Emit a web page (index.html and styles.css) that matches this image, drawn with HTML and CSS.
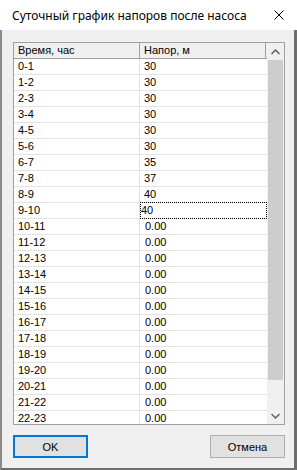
FILE: index.html
```html
<!DOCTYPE html>
<html lang="ru">
<head>
<meta charset="utf-8">
<link rel="stylesheet" href="styles.css">
</head>
<body>
<div class="window">
  <div class="titlebar">
    <span class="title">Суточный график напоров после насоса</span>
    <svg class="close" width="10" height="10" viewBox="0 0 10 10"><path d="M0.5 0.5 L9.5 9.5 M9.5 0.5 L0.5 9.5" stroke="#000" stroke-width="1" fill="none"/></svg>
  </div>
  <div class="client">
    <div class="grid">
      <div class="table">
        <div class="row head"><div class="cell c1">Время, час</div><div class="cell c2">Напор, м</div></div>
        <div class="rows">
          <div class="row"><div class="cell c1">0-1</div><div class="cell c2">30</div></div>
          <div class="row"><div class="cell c1">1-2</div><div class="cell c2">30</div></div>
          <div class="row"><div class="cell c1">2-3</div><div class="cell c2">30</div></div>
          <div class="row"><div class="cell c1">3-4</div><div class="cell c2">30</div></div>
          <div class="row"><div class="cell c1">4-5</div><div class="cell c2">30</div></div>
          <div class="row"><div class="cell c1">5-6</div><div class="cell c2">30</div></div>
          <div class="row"><div class="cell c1">6-7</div><div class="cell c2">35</div></div>
          <div class="row"><div class="cell c1">7-8</div><div class="cell c2">37</div></div>
          <div class="row"><div class="cell c1">8-9</div><div class="cell c2">40</div></div>
          <div class="row"><div class="cell c1">9-10</div><div class="cell c2 focus">40</div></div>
          <div class="row"><div class="cell c1">10-11</div><div class="cell c2 num">0.00</div></div>
          <div class="row"><div class="cell c1">11-12</div><div class="cell c2 num">0.00</div></div>
          <div class="row"><div class="cell c1">12-13</div><div class="cell c2 num">0.00</div></div>
          <div class="row"><div class="cell c1">13-14</div><div class="cell c2 num">0.00</div></div>
          <div class="row"><div class="cell c1">14-15</div><div class="cell c2 num">0.00</div></div>
          <div class="row"><div class="cell c1">15-16</div><div class="cell c2 num">0.00</div></div>
          <div class="row"><div class="cell c1">16-17</div><div class="cell c2 num">0.00</div></div>
          <div class="row"><div class="cell c1">17-18</div><div class="cell c2 num">0.00</div></div>
          <div class="row"><div class="cell c1">18-19</div><div class="cell c2 num">0.00</div></div>
          <div class="row"><div class="cell c1">19-20</div><div class="cell c2 num">0.00</div></div>
          <div class="row"><div class="cell c1">20-21</div><div class="cell c2 num">0.00</div></div>
          <div class="row"><div class="cell c1">21-22</div><div class="cell c2 num">0.00</div></div>
          <div class="row"><div class="cell c1">22-23</div><div class="cell c2 num">0.00</div></div>
        </div>
      </div>
      <div class="scrollbar">
        <div class="arrow"><svg width="9" height="6" viewBox="0 0 9 6"><path d="M0.5 5 L4.5 1 L8.5 5" stroke="#606060" stroke-width="1.5" fill="none"/></svg></div>
        <div class="track"><div class="thumb"></div></div>
        <div class="arrow"><svg width="9" height="6" viewBox="0 0 9 6"><path d="M0.5 1 L4.5 5 L8.5 1" stroke="#606060" stroke-width="1.5" fill="none"/></svg></div>
      </div>
    </div>
    <div class="buttons">
      <button class="btn default">OK</button>
      <button class="btn">Отмена</button>
    </div>
  </div>
</div>
</body>
</html>
```
FILE: styles.css
```css
html, body {
  margin: 0;
  padding: 0;
}
body {
  width: 297px;
  height: 470px;
  overflow: hidden;
  background: #6e6e6e;
}
.window {
  width: 297px;
  height: 470px;
  display: flex;
  flex-direction: column;
}
.titlebar {
  height: 30px;
  background: #fff;
  display: flex;
  align-items: center;
  justify-content: space-between;
  padding: 0 12px 0 12px;
  box-sizing: border-box;
  flex: none;
}
.title {
  font-family: "Segoe UI", "Noto Sans", sans-serif;
  font-size: 12px;
  color: #000;
}
.close {
  display: block;
  margin-right: 1px;
}
.client {
  flex: 1;
  background: #f0f0f0;
  border-left: 2px solid #8a8a8a;
  border-right: 3px solid #6e6e6e;
  border-bottom: 2px solid #6e6e6e;
  padding: 12px 0 0 11px;
  display: flex;
  flex-direction: column;
  min-height: 0;
}
.grid {
  width: 270px;
  height: 381px;
  border: 1px solid #a0a0a0;
  display: flex;
  background: #fff;
  overflow: hidden;
}
.table {
  width: 253px;
  display: flex;
  flex-direction: column;
  font-family: "Liberation Sans", Arial, sans-serif;
  font-size: 11px;
  color: #000;
}
.row {
  display: flex;
  height: 16px;
  box-sizing: border-box;
  border-bottom: 1px solid #e3e3e3;
  flex: none;
}
.cell {
  box-sizing: border-box;
  height: 15px;
  line-height: 15px;
  padding-left: 4px;
  white-space: nowrap;
}
.c1 {
  width: 126px;
  border-right: 1px solid #e3e3e3;
}
.c2 {
  width: 127px;
}
.head {
  background: #f0f0f0;
  border-bottom: 1px solid #a0a0a0;
}
.head .c1 {
  border-right: 1px solid #a0a0a0;
}
.head .c2 {
  width: 126px;
  border-right: 1px solid #a0a0a0;
}
.rows {
  overflow: hidden;
  flex: 1;
  display: flex;
  flex-direction: column;
}
.focus {
  border: 1px dotted #000;
  height: 17px;
  line-height: 15px;
  margin-top: -1px;
  padding-left: 0;
}
.num {
  padding-left: 5px;
}
.scrollbar {
  width: 17px;
  background: #f0f0f0;
  display: flex;
  flex-direction: column;
}
.arrow {
  height: 17px;
  display: flex;
  align-items: center;
  justify-content: center;
  flex: none;
}
.track {
  flex: 1;
  padding: 0 1px;
}
.thumb {
  height: 320px;
  background: #cdcdcd;
}
.buttons {
  display: flex;
  justify-content: space-between;
  width: 272px;
  margin-top: 10px;
}
.btn {
  width: 75px;
  height: 23px;
  background: #e1e1e1;
  border: 1px solid #adadad;
  font-family: "Liberation Sans", Arial, sans-serif;
  font-size: 11px;
  color: #000;
  padding: 0;
  margin: 0;
}
.btn.default {
  border: 2px solid #0078d7;
}
```
